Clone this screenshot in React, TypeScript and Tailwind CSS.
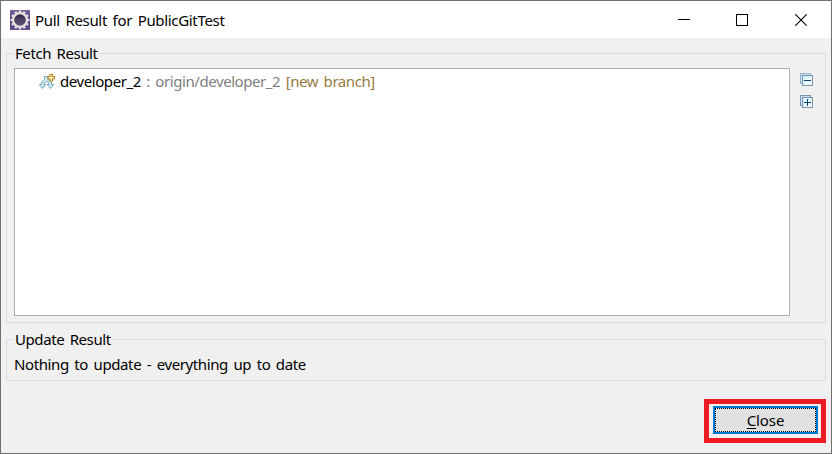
import type { ReactNode } from "react";

const TEETH = [0, 30, 60, 90, 120, 150, 180, 210, 240, 270, 300, 330];

function AppIcon() {
  return (
    <svg width="20" height="20" viewBox="0 0 20 20" className="shrink-0">
      <defs>
        <linearGradient id="plate" x1="0" y1="0" x2="0" y2="1">
          <stop offset="0" stopColor="#76649a" />
          <stop offset="0.5" stopColor="#4f3b75" />
          <stop offset="1" stopColor="#654d91" />
        </linearGradient>
        <linearGradient id="core" x1="0" y1="0" x2="0" y2="1">
          <stop offset="0" stopColor="#292542" />
          <stop offset="1" stopColor="#66577f" />
        </linearGradient>
      </defs>
      <rect width="20" height="20" fill="url(#plate)" />
      {TEETH.map((a) => (
        <rect key={a} x="8.8" y="0.5" width="2.4" height="3" fill="#e6e4e4" transform={`rotate(${a} 10 10)`} />
      ))}
      <circle cx="10" cy="10" r="6.9" fill="url(#core)" stroke="#e3e1df" strokeWidth="2.3" />
      <path d="M5 8.5h10M4.6 10.5h10.8" stroke="#52496e" strokeWidth=".6" />
    </svg>
  );
}

function FetchIcon() {
  return (
    <svg width="16" height="16" viewBox="0 0 16 16" className="shrink-0">
      <path
        d="M5.500 2.500h3.500v3L12.500 8v2.500h2.200L11.500 14.500 8.200 10.500h1.800V9L7.500 7.200 5 9v1.500h1.800L3.500 14.500.300 10.500H2.500V8L5.500 5.500z"
        fill="#cdeef2"
        stroke="#6f9fae"
        strokeWidth=".9"
      />
      <path d="M11 .500h2.500v2h2v2.500h-2v2H11V5H9V2.500h2z" fill="#fff3c4" stroke="#b8801f" strokeWidth="1.100" />
    </svg>
  );
}

function TreeIcon({ plus }: { plus?: boolean }) {
  return (
    <svg width="13" height="13" viewBox="0 0 13 13" shapeRendering="crispEdges" className="shrink-0">
      <rect x=".5" y=".5" width="10" height="10" fill="#c5e5f5" stroke={plus ? "#7f94ad" : "#9fb1c9"} />
      <rect x="2.5" y="2.5" width="10" height="10" fill="#f2fcff" stroke="#7f94ad" />
      <path d="M3 3h9v2H5v7H3z" fill="#d9f3fc" />
      <path d={plus ? "M4 7h7v1H4zM7 4h1v7H7z" : "M4 7h7v1H4z"} fill="#00467f" />
    </svg>
  );
}

function Group({ title, width, children, className }: { title: string; width: string; children: ReactNode; className: string }) {
  return (
    <section className={`border border-[#dcdcdc] ${className}`}>
      <h2 className={`-mt-[11px] ml-[6px] h-5 bg-[#f0f0f0] pl-[2px] leading-5 tracking-[-0.42px] whitespace-nowrap ${width}`}>{title}</h2>
      {children}
    </section>
  );
}

export default function App() {
  return (
    <div className="flex h-[454px] w-[832px] flex-col border border-[#707070] bg-[#f0f0f0] font-['Noto_Sans','Noto_Sans_CJK_KR',sans-serif] text-[15px] text-black [word-spacing:2px]">
      <header className="flex h-[37px] shrink-0 items-center bg-white pl-[9px]">
        <AppIcon />
        <h1 className="ml-[5px] grow leading-5 tracking-[-0.32px] whitespace-nowrap">Pull Result for PublicGitTest</h1>
        <div className="flex items-center gap-[46px] pr-6">
          <svg width="12" height="12" shapeRendering="crispEdges"><path d="M0 5h12v1H0z" /></svg>
          <svg width="12" height="12" shapeRendering="crispEdges"><rect x=".5" y=".5" width="11" height="11" fill="none" stroke="#000" /></svg>
          <svg width="12" height="12" className="ml-px"><path d="M.3.3l11.4 11.4M11.700.300L.300 11.700" stroke="#000" strokeWidth="1.1" /></svg>
        </div>
      </header>
      <main className="flex grow flex-col px-[5px] pt-[15px]">
        <Group title="Fetch Result" width="w-[85px]" className="h-[270px]">
          <div className="mt-[5px] flex pl-[7px]">
            <div className="h-[248px] w-[776px] border border-[#abadb3] bg-white">
              <div className="flex h-[25px] items-center pl-6">
                <FetchIcon />
                <p className="-mt-[2px] ml-[5px] leading-5 tracking-[-0.43px] whitespace-pre">
                  <span>developer_2</span>
                  <span className="text-[#808080]"> : origin/developer_2 </span>
                  <span className="text-[#957b42]">[new branch]</span>
                </p>
              </div>
            </div>
            <div className="ml-[10px] flex flex-col gap-[9px] pt-[5px]">
              <TreeIcon />
              <TreeIcon plus />
            </div>
          </div>
        </Group>
        <Group title="Update Result" width="w-[100px]" className="mt-4 h-[42px]">
          <p className="mt-[5px] pl-[7px] leading-5 tracking-[-0.39px] whitespace-nowrap">Nothing to update - everything up to date</p>
        </Group>
        <div className="mt-[18px] flex justify-end">
          <div className="h-[44px] w-[122px] border-[5px] border-[#ed1c24] pt-[2px] pl-1">
            <button className="block h-[28px] w-[105px] border-2 border-[#0078d7] bg-[#e1e1e1]">
              <span className="flex h-full w-full items-center justify-center border border-dotted border-black leading-5 tracking-[-0.1px]">
                <u className="underline underline-offset-2">C</u>lose
              </span>
            </button>
          </div>
        </div>
      </main>
    </div>
  );
}
